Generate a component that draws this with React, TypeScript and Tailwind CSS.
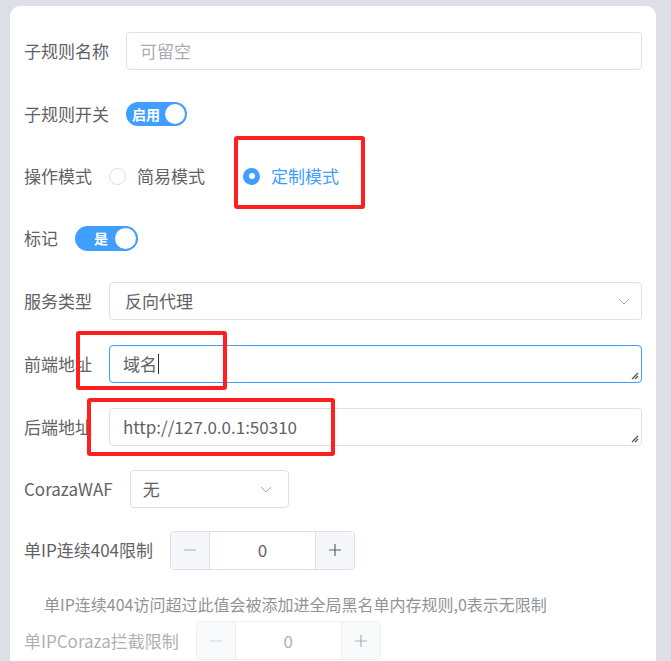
import React from 'react';

const font = { fontFamily: '"Noto Sans CJK SC", "Noto Sans", sans-serif' };

function Chevron() {
  return (
    <svg width="14" height="14" viewBox="0 0 14 14" fill="none" className="text-[#a8abb2]">
      <path d="M2 5 L7 10 L12 5" stroke="currentColor" strokeWidth="1" />
    </svg>
  );
}

function Grip() {
  return (
    <svg width="9" height="9" viewBox="0 0 9 9" className="absolute bottom-[2px] right-[2px]">
      <path d="M8 2 L2 8 M8 5 L5 8" stroke="#555" strokeWidth="1.3" />
    </svg>
  );
}

function Row({ label, children, mb }: { label: string; children: React.ReactNode; mb: string }) {
  return (
    <div className={`flex h-[38px] items-center ${mb}`}>
      <span className="mr-[17px] shrink-0 text-[17px] text-[#606266]">{label}</span>
      {children}
    </div>
  );
}

function Stepper({ faded }: { faded?: boolean }) {
  return (
    <div className={`flex h-[39px] w-[185px] overflow-hidden rounded-[4px] border border-[#dcdfe6] ${faded ? 'opacity-50' : ''}`}>
      <div className="flex w-[39px] items-center justify-center border-r border-[#dcdfe6] bg-[#f5f7fa] text-[#a8abb2]">
        <svg width="14" height="14" viewBox="0 0 14 14"><path d="M1 7 H13" stroke="currentColor" strokeWidth="1.2" /></svg>
      </div>
      <div className="flex flex-1 items-center justify-center text-[17px] text-[#606266]">0</div>
      <div className="flex w-[39px] items-center justify-center border-l border-[#dcdfe6] bg-[#f5f7fa] text-[#606266]">
        <svg width="14" height="14" viewBox="0 0 14 14"><path d="M1 7 H13 M7 1 V13" stroke="currentColor" strokeWidth="1.2" /></svg>
      </div>
    </div>
  );
}

export default function App() {
  return (
    <div className="relative h-[661px] overflow-hidden bg-[#dde0e7] pl-[10px] pr-[15px] pt-[6px]" style={font}>
      <div className="h-[700px] rounded-t-[10px] bg-white pl-[14px] pr-[14px] pt-[26px]">
        <Row label="子规则名称" mb="mb-[25px]">
          <div className="flex h-[38px] flex-1 items-center rounded-[4px] border border-[#dcdfe6] pl-[13px] text-[17px] text-[#a8abb2]">
            可留空
          </div>
        </Row>

        <Row label="子规则开关" mb="mb-[24px]">
          <div className="flex h-[24px] w-[61px] items-center justify-between rounded-full bg-[#409eff] pl-[6px] pr-[2px]">
            <span className="text-[14px] font-semibold leading-none text-white">启用</span>
            <span className="h-[20px] w-[20px] rounded-full bg-white" />
          </div>
        </Row>

        <Row label="操作模式" mb="mb-[24px]">
          <div className="flex items-center">
            <span className="h-[17px] w-[17px] rounded-full border border-[#dcdfe6]" />
            <span className="ml-[11px] text-[17px] text-[#606266]">简易模式</span>
            <span className="ml-[38px] flex h-[17px] w-[17px] items-center justify-center rounded-full bg-[#409eff]">
              <span className="h-[6px] w-[6px] rounded-full bg-white" />
            </span>
            <span className="ml-[11px] text-[17px] text-[#409eff]">定制模式</span>
          </div>
        </Row>

        <Row label="标记" mb="mb-[25px]">
          <div className="flex h-[25px] w-[63px] items-center justify-between rounded-full bg-[#409eff] pl-[19px] pr-[2px]">
            <span className="text-[14px] font-semibold leading-none text-white">是</span>
            <span className="h-[21px] w-[21px] rounded-full bg-white" />
          </div>
        </Row>

        <Row label="服务类型" mb="mb-[25px]">
          <div className="flex h-[38px] flex-1 items-center justify-between rounded-[4px] border border-[#dcdfe6] pl-[15px] pr-[10px] text-[17px] text-[#606266]">
            <span>反向代理</span>
            <Chevron />
          </div>
        </Row>

        <Row label="前端地址" mb="mb-[25px]">
          <div className="relative flex h-[38px] flex-1 items-center rounded-[4px] border border-[#409eff] pl-[13px] text-[17px] text-[#606266]">
            <span>域名</span>
            <span className="ml-[1px] h-[20px] w-[1px] bg-[#303133]" />
            <Grip />
          </div>
        </Row>

        <Row label="后端地址" mb="mb-[24px]">
          <div className="relative flex h-[38px] flex-1 items-center rounded-[4px] border border-[#dcdfe6] pl-[13px] text-[17px] text-[#606266]">
            <span>http://127.0.0.1:50310</span>
            <Grip />
          </div>
        </Row>

        <Row label="CorazaWAF" mb="mb-[23px]">
          <div className="flex h-[38px] w-[159px] items-center justify-between rounded-[4px] border border-[#dcdfe6] pl-[12px] pr-[15px] text-[17px] text-[#606266]">
            <span>无</span>
            <Chevron />
          </div>
        </Row>

        <Row label="单IP连续404限制" mb="mb-[24px]">
          <Stepper />
        </Row>

        <p className="mb-[6px] pl-[20px] text-[16px] leading-[22px] text-[#909399]">
          单IP连续404访问超过此值会被添加进全局黑名单内存规则,0表示无限制
        </p>

        <div className="flex h-[39px] items-center">
          <span className="mr-[17px] text-[17px] text-[#606266] opacity-50">单IPCoraza拦截限制</span>
          <Stepper faded />
        </div>
      </div>

      <div className="absolute left-[234px] top-[136px] h-[73px] w-[131px] rounded-[3px] border-[4px] border-[#ff1f1f]" />
      <div className="absolute left-[76px] top-[331px] h-[59px] w-[151px] rounded-[3px] border-[4px] border-[#ff1f1f]" />
      <div className="absolute left-[87px] top-[398px] h-[58px] w-[248px] rounded-[3px] border-[4px] border-[#ff1f1f]" />
    </div>
  );
}
